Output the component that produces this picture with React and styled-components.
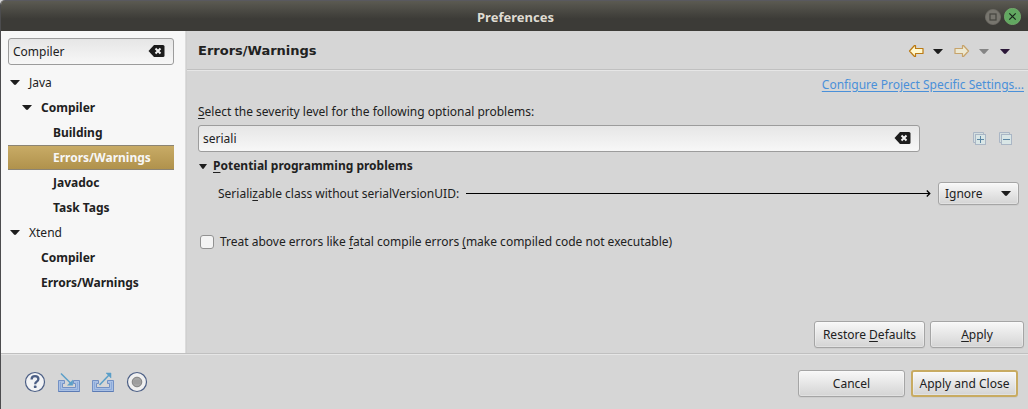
import React from "react";
import styled, { createGlobalStyle, css } from "styled-components";

const GlobalStyle = createGlobalStyle`
  *, *::before, *::after { box-sizing: border-box; }
  body {
    margin: 0;
    background: #d6d6d6;
    color: #212121;
    font: 12px/16px "Noto Sans", sans-serif;
  }
  button, input, select { font: inherit; color: inherit; margin: 0; }
  svg { display: block; flex: none; }
`;

const Window = styled.div`
  min-height: 100vh;
  display: flex;
  flex-direction: column;
  border-left: 1px solid #4c4c4e;
  border-radius: 5px 0 0 0;
  overflow: hidden;
`;

const TitleBar = styled.header`
  height: 31px;
  display: flex;
  align-items: center;
  gap: 3px;
  padding: 1px 7px 0 0;
  border-top: 1px solid #59595f;
  background: linear-gradient(#5b5a52, #3c3b37 60%, #3c3b37);
`;

const WindowTitle = styled.h1`
  flex: 1;
  margin: 0;
  padding-left: 48px;
  text-align: center;
  font-size: 13px;
  line-height: 16px;
  color: #dfdbd2;
`;

const PlainButton = styled.button`
  display: flex;
  align-items: center;
  justify-content: center;
  padding: 0;
  border: 0;
  background: none;
`;

const Body = styled.div`
  flex: 1;
  display: flex;
`;

const Sidebar = styled.aside`
  flex: none;
  width: 185px;
  padding: 7px 11px 0 7px;
  background: #f7f7f7;
  border-right: 1px solid #dcdcdc;
`;

const Field = styled.div`
  position: relative;
  flex: 1;
`;

const TextInput = styled.input`
  display: block;
  width: 100%;
  height: 27px;
  padding: 0 28px 0 4px;
  border: 1px solid #9c9c9c;
  border-radius: 3px;
  background: linear-gradient(#e6e6e6, #f7f7f7);
  outline: none;
`;

const ClearButton = styled(PlainButton)`
  position: absolute;
  right: 9px;
  top: 6px;
`;

const Tree = styled.ul`
  list-style: none;
  margin: 5px 0 0;
  padding: 0;
`;

const TreeRow = styled.li`
  display: flex;
  align-items: center;
  height: 25px;
  padding-left: ${({ $level }) => $level * 12}px;
  font-weight: ${({ $level }) => ($level ? 700 : 400)};
  ${({ $selected }) =>
    $selected &&
    css`
      color: #f7f7f7;
      border: 1px solid #8b8474;
      border-width: 1px 0;
      background: linear-gradient(#c8ab66, #b0924c);
    `}
`;

const Twistie = styled.span`
  flex: none;
  width: 21px;
  padding-left: 2px;
`;

const Page = styled.main`
  flex: 1;
  min-width: 0;
  display: flex;
  flex-direction: column;
  border-left: 1px solid #d0d0d0;
`;

const PageHeader = styled.div`
  display: flex;
  align-items: center;
  justify-content: space-between;
  height: 40px;
  padding: 1px 18px 0 11px;
  border-bottom: 1px solid #e6e6e6;
  box-shadow: inset 0 -1px #c0c0c0;
`;

const PageTitle = styled.h2`
  margin: 0;
  font: 700 13px/16px "DejaVu Sans", sans-serif;
`;

const NavBar = styled.div`
  display: flex;
  align-items: center;
  gap: 11px;
`;

const NavPair = styled.div`
  display: flex;
  align-items: center;
  gap: 9px;
`;

const PageContent = styled.div`
  flex: 1;
  display: flex;
  flex-direction: column;
  padding: 6px 4px 5px 11px;
`;

const SettingsLink = styled.a`
  align-self: flex-end;
  color: #4a90d9;
  text-decoration: underline;
  text-underline-offset: 2px;
`;

const FilterLabel = styled.label`
  margin: 11px 0 5px;
`;

const Key = styled.span`
  text-decoration: underline;
  text-underline-offset: 2px;
  text-decoration-skip-ink: none;
`;

const FilterRow = styled.div`
  display: flex;
  align-items: center;
  padding-right: 11px;
`;

const ExpandTools = styled.div`
  display: flex;
  gap: 12px;
  margin-left: 53px;
`;

const SectionToggle = styled(PlainButton)`
  align-self: flex-start;
  gap: 6px;
  margin: 6px 0 8px;
  padding-left: 1px;
  font-weight: 700;
`;

const ProblemRow = styled.div`
  display: flex;
  align-items: center;
  gap: 7px;
  padding: 0 5px 0 20px;
`;

const Leader = styled.span`
  flex: 1;
  display: flex;
  align-items: center;
  &::before {
    content: "";
    flex: 1;
    height: 1px;
    margin-right: -4px;
    background: #000;
  }
`;

const raised = css`
  border: 1px solid #a5a5a5;
  border-radius: 3px;
  background: linear-gradient(#f8f8f8, #d4d4d4);
  box-shadow: inset 0 0 0 1px rgba(255, 255, 255, 0.3), 0 1px #cdcdcd;
`;

const SelectBox = styled.div`
  position: relative;
  display: flex;
  align-items: center;
  svg {
    position: absolute;
    right: 8px;
    pointer-events: none;
  }
`;

const Select = styled.select`
  ${raised}
  appearance: none;
  width: 81px;
  height: 23px;
  padding: 0 24px 0 6px;
`;

const FatalRow = styled.label`
  display: flex;
  align-items: center;
  align-self: flex-start;
  gap: 6px;
  margin: 29px 0 16px;
  padding-left: 2px;
`;

const Checkbox = styled.input`
  appearance: none;
  width: 14px;
  height: 14px;
  border: 1px solid #929292;
  border-radius: 3px;
  background: #f4f4f4;
`;

const PageActions = styled.div`
  display: flex;
  justify-content: flex-end;
  gap: 5px;
  margin-top: auto;
`;

const Button = styled.button`
  ${raised}
  height: 27px;
  min-width: ${({ $width }) => $width}px;
  padding: 0 7px;
  ${({ $primary }) =>
    $primary &&
    css`
      border: 2px solid #c8ab62;
      padding: 0 6px;
    `}
`;

const Footer = styled.footer`
  display: flex;
  align-items: center;
  justify-content: space-between;
  height: 56px;
  padding: 4px 10px 0 23px;
  border-top: 1px solid #c0c0c0;
  box-shadow: inset 0 1px #e6e6e6;
`;

const FooterTools = styled.div`
  display: flex;
  gap: 12px;
  padding-bottom: 3px;
`;

const FooterActions = styled.div`
  display: flex;
  gap: 6px;
`;

const Triangle = ({ width = 10, color = "#1d1d1d" }) => (
  <svg width={width} height="5" viewBox="0 0 10 5" preserveAspectRatio="none">
    <path d="M0 0H10L6 4.6Q5 5.4 4 4.6Z" fill={color} />
  </svg>
);

const ClearIcon = () => (
  <svg width="17" height="14" viewBox="0 0 17 14">
    <path d="M6 1H15Q16.500 1 16.500 2.500V11.500Q16.500 13 15 13H6L.5 7Z" fill="#1c1c1c" />
    <path d="M7.500 4.500L12.500 9.500M12.500 4.500L7.500 9.500" stroke="#f3f3f3" strokeWidth="2" />
  </svg>
);

const MaximizeIcon = () => (
  <svg width="16" height="16" viewBox="0 0 16 16">
    <circle cx="8" cy="8" r="7.600" fill="#77756e" stroke="#6d6b64" strokeWidth=".8" />
    <rect x="5" y="5" width="6" height="6" fill="none" stroke="#45443f" strokeWidth="1.200" />
  </svg>
);

const CloseIcon = () => (
  <svg width="17" height="17" viewBox="0 0 17 17">
    <circle cx="8.500" cy="8.500" r="8.200" fill="#62a861" stroke="#7fba75" strokeWidth=".6" />
    <path d="M5.300 5.300L11.700 11.700M11.700 5.300L5.300 11.700" stroke="#17251a" strokeWidth="1.200" />
  </svg>
);

const ArrowIcon = ({ forward }) => (
  <svg width="16" height="14" viewBox="0 0 16 14" opacity={forward ? 0.55 : 1}>
    <path
      d="M1.500 7L6.500 1.500H7.500V4.500H15V9.500H7.500V12.500H6.500Z"
      transform={forward ? "translate(16 0) scale(-1 1)" : undefined}
      fill="#fff8cf"
      stroke="#bb7a13"
      strokeWidth="1.200"
      strokeLinejoin="round"
    />
  </svg>
);

const StackIcon = ({ plus }) => (
  <svg width="14" height="14" viewBox="0 0 14 14">
    <path d="M.5 10.500V.5H10.500V3H3V10.500Z" fill="#d5dfe0" stroke="#aab6c5" />
    <rect x="2.500" y="2.500" width="10" height="10" fill="#d9e6e6" stroke="#aab6c5" />
    <path d={plus ? "M4 7.500H11M7.500 4V11" : "M4 7.500H11"} stroke="#5c87a5" />
  </svg>
);

const ArrowHead = () => (
  <svg width="5" height="7" viewBox="0 0 5 7">
    <path d="M.8 .5L3.800 3.500L.8 6.500" fill="none" stroke="#000" strokeWidth="1.300" />
  </svg>
);

const HelpIcon = () => (
  <svg width="22" height="22" viewBox="0 0 22 22">
    <circle cx="11" cy="11" r="9.500" fill="#f2f3f5" stroke="#4c5f85" strokeWidth="1.200" />
    <path
      d="M7.600 8.500Q7.600 5.200 11 5.200T14.400 8Q14.400 9.700 12.600 10.700Q11.200 11.500 11.200 13.200"
      fill="none"
      stroke="#4c5f85"
      strokeWidth="2.300"
    />
    <rect x="9.900" y="14.600" width="2.600" height="2.400" rx=".6" fill="#4c5f85" />
  </svg>
);

const TrayIcon = ({ out }) => (
  <svg width="22" height="22" viewBox="0 0 22 22">
    <path
      d="M.5 9.500H6.500V12.500H4.500V16.500H17.500V12.500H15.500V9.500H21.500V20.500H.5Z"
      fill="#a9c0e4"
      stroke="#7391c4"
    />
    <path d="M2.500 11V18.500H19.500V11" fill="none" stroke="#8dabda" />
    <path d="M.5 20.500H21.500" stroke="#5c7bb4" />
    {out ? (
      <g stroke="#5b9fc8" strokeWidth="1.500">
        <path d="M7.500 14L17.500 3.500" />
        <path d="M14 2H19V7Z" fill="#5b9fc8" strokeWidth=".5" />
      </g>
    ) : (
      <g stroke="#5b9fc8" strokeWidth="1.500">
        <path d="M3 2.500L13.500 13" />
        <path d="M14.800 9V14.200H9.500Z" fill="#5b9fc8" strokeWidth=".5" />
      </g>
    )}
  </svg>
);

const RecordIcon = () => (
  <svg width="22" height="22" viewBox="0 0 22 22">
    <circle cx="11" cy="11" r="9.500" fill="#f0f0f0" stroke="#4c5f85" strokeWidth="1.200" />
    <circle cx="11" cy="11" r="4.800" fill="#a5a5a5" stroke="#808080" />
    <path d="M7.500 10H14.500M7.500 12H14.500" stroke="#929292" strokeWidth=".7" />
  </svg>
);

const treeItems = [
  { label: "Java", level: 0, open: true },
  { label: "Compiler", level: 1, open: true },
  { label: "Building", level: 2 },
  { label: "Errors/Warnings", level: 2, selected: true },
  { label: "Javadoc", level: 2 },
  { label: "Task Tags", level: 2 },
  { label: "Xtend", level: 0, open: true },
  { label: "Compiler", level: 1 },
  { label: "Errors/Warnings", level: 1 },
];

const SearchField = ({ id, label, value }) => (
  <Field>
    <TextInput id={id} aria-label={label} defaultValue={value} />
    <ClearButton aria-label="Clear"><ClearIcon /></ClearButton>
  </Field>
);

export default function App() {
  return (
    <>
      <GlobalStyle />
      <Window>
        <TitleBar>
          <WindowTitle>Preferences</WindowTitle>
          <PlainButton aria-label="Maximize"><MaximizeIcon /></PlainButton>
          <PlainButton aria-label="Close"><CloseIcon /></PlainButton>
        </TitleBar>
        <Body>
          <Sidebar>
            <SearchField id="page-filter" label="Filter pages" value="Compiler" />
            <Tree>
              {treeItems.map((item, i) => (
                <TreeRow key={i} $level={item.level} $selected={item.selected}>
                  <Twistie>{item.open && <Triangle />}</Twistie>
                  {item.label}
                </TreeRow>
              ))}
            </Tree>
          </Sidebar>
          <Page>
            <PageHeader>
              <PageTitle>Errors/Warnings</PageTitle>
              <NavBar>
                <NavPair>
                  <PlainButton aria-label="Back"><ArrowIcon /></PlainButton>
                  <PlainButton aria-label="Back history"><Triangle /></PlainButton>
                </NavPair>
                <NavPair>
                  <PlainButton aria-label="Forward"><ArrowIcon forward /></PlainButton>
                  <PlainButton aria-label="Forward history"><Triangle color="#858585" /></PlainButton>
                </NavPair>
                <PlainButton aria-label="View menu"><Triangle color="#2b1738" /></PlainButton>
              </NavBar>
            </PageHeader>
            <PageContent>
              <SettingsLink href="#project">Configure Project Specific Settings...</SettingsLink>
              <FilterLabel htmlFor="problem-filter">
                <Key>S</Key>elect the severity level for the following optional problems:
              </FilterLabel>
              <FilterRow>
                <SearchField id="problem-filter" value="seriali" />
                <ExpandTools>
                  <PlainButton aria-label="Expand all"><StackIcon plus /></PlainButton>
                  <PlainButton aria-label="Collapse all"><StackIcon /></PlainButton>
                </ExpandTools>
              </FilterRow>
              <SectionToggle aria-expanded="true">
                <Triangle width={8} />
                <span><Key>P</Key>otential programming problems</span>
              </SectionToggle>
              <ProblemRow>
                <label htmlFor="severity">Seriali<Key>z</Key>able class without serialVersionUID:</label>
                <Leader><ArrowHead /></Leader>
                <SelectBox>
                  <Select id="severity" defaultValue="Ignore">
                    <option>Ignore</option>
                  </Select>
                  <Triangle />
                </SelectBox>
              </ProblemRow>
              <FatalRow>
                <Checkbox type="checkbox" />
                <span>
                  Treat above errors like <Key>f</Key>atal compile errors <Key>(</Key>make compiled code not executable)
                </span>
              </FatalRow>
              <PageActions>
                <Button $width={111}>Restore <Key>D</Key>efaults</Button>
                <Button $width={94}><Key>A</Key>pply</Button>
              </PageActions>
            </PageContent>
          </Page>
        </Body>
        <Footer>
          <FooterTools>
            <PlainButton aria-label="Help"><HelpIcon /></PlainButton>
            <PlainButton aria-label="Import"><TrayIcon /></PlainButton>
            <PlainButton aria-label="Export"><TrayIcon out /></PlainButton>
            <PlainButton aria-label="Record"><RecordIcon /></PlainButton>
          </FooterTools>
          <FooterActions>
            <Button $width={107}>Cancel</Button>
            <Button $width={107} $primary>Apply and Close</Button>
          </FooterActions>
        </Footer>
      </Window>
    </>
  );
}
